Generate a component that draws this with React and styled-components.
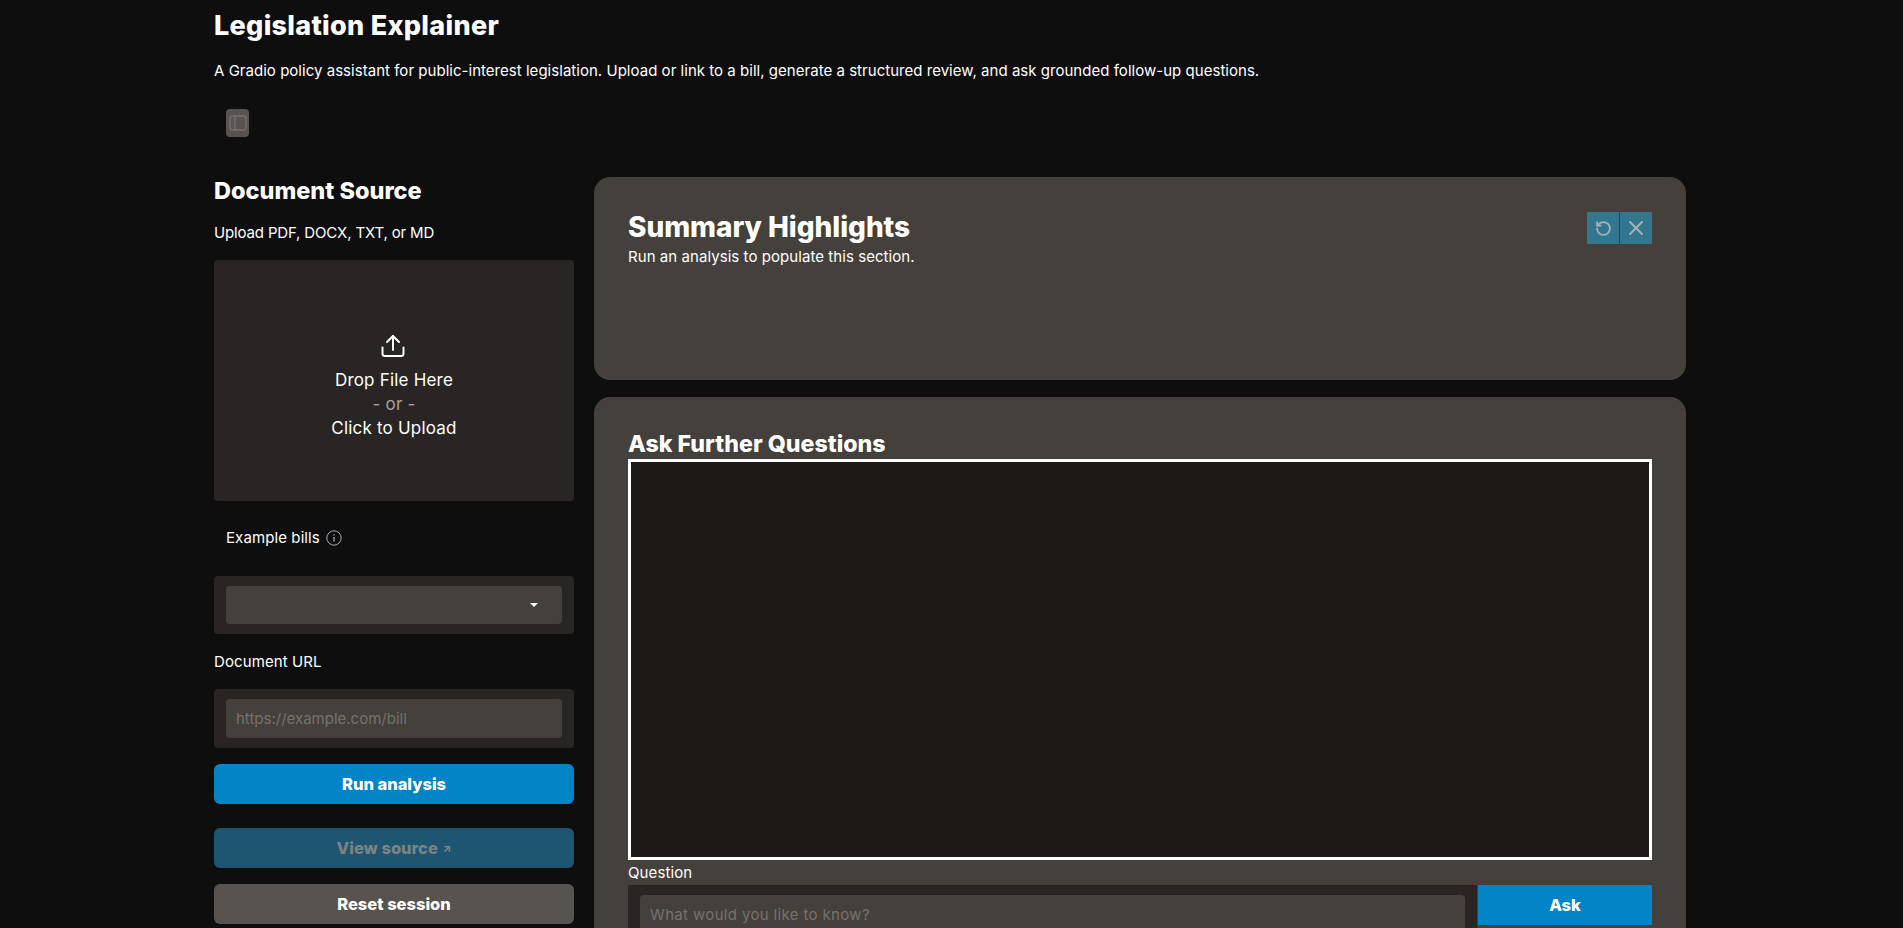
import React from "react";
import styled, { createGlobalStyle } from "styled-components";
import { RotateCcw, X } from "lucide-react";

const GlobalStyle = createGlobalStyle`
  html, body {
    margin: 0;
    height: 928px;
    overflow: hidden;
    background: #0f0e0f;
  }
  * {
    box-sizing: border-box;
  }
  body {
    font-family: Inter, "Noto Sans", sans-serif;
    color: #ffffff;
  }
`;

const App = () => {
  return (
    <Page>
      <GlobalStyle />
      <Title>Legislation Explainer</Title>
      <Subtitle>
        A Gradio policy assistant for public-interest legislation. Upload or
        link to a bill, generate a structured review, and ask grounded
        follow-up questions.
      </Subtitle>
      <SidebarToggle aria-label="Toggle sidebar">
        <svg width="18" height="18" viewBox="0 0 18 18" fill="none">
          <rect x="1" y="2" width="16" height="14" rx="2.5" stroke="#78716c" strokeWidth="1.3" />
          <path d="M6 2v14" stroke="#78716c" strokeWidth="1.3" />
          <path d="M3.5 6h.6M3.5 9h.6M3.5 12h.6" stroke="#78716c" strokeWidth="1.2" />
        </svg>
      </SidebarToggle>

      <Columns>
        <LeftColumn>
          <SectionTitle>Document Source</SectionTitle>
          <UploadLabel>Upload PDF, DOCX, TXT, or MD</UploadLabel>
          <DropZone>
            <svg width="24" height="24" viewBox="0 0 24 24" fill="none" stroke="#fff" strokeWidth="2" strokeLinecap="round" strokeLinejoin="round">
              <path d="M1.5 13.5v6a2.5 2.5 0 0 0 2.5 2.5h16a2.5 2.5 0 0 0 2.5-2.5v-6" />
              <path d="M12 16V2" />
              <path d="M6 8l6-6 6 6" />
            </svg>
            <DropLine>Drop File Here</DropLine>
            <DropOr>- or -</DropOr>
            <DropLine>Click to Upload</DropLine>
          </DropZone>
          <ExampleLabel>
            Example bills
            <svg width="16" height="16" viewBox="0 0 16 16" fill="none" stroke="#a3acb8" strokeWidth="1">
              <circle cx="8" cy="8" r="7.2" />
              <path d="M8 7v4.5M8 4.2v1.4" strokeWidth="1.3" />
            </svg>
          </ExampleLabel>
          <SelectBox>
            <SelectInner>
              <svg width="8" height="4" viewBox="0 0 8 4" fill="#fff">
                <path d="M0 0h8L4 4z" />
              </svg>
            </SelectInner>
          </SelectBox>
          <UrlLabel>Document URL</UrlLabel>
          <FieldBox>
            <FieldInner>
              <Placeholder>https://example.com/bill</Placeholder>
            </FieldInner>
          </FieldBox>
          <RunButton>Run analysis</RunButton>
          <SourceButton>
            View source <SourceArrow>↗</SourceArrow>
          </SourceButton>
          <ResetButton>Reset session</ResetButton>
        </LeftColumn>

        <RightColumn>
          <SummaryCard>
            <CardActions>
              <CardAction aria-label="Retry">
                <RotateCcw size={17} strokeWidth={2.5} />
              </CardAction>
              <CardAction aria-label="Clear">
                <X size={24} strokeWidth={1.9} />
              </CardAction>
            </CardActions>
            <CardTitle>Summary Highlights</CardTitle>
            <CardText>Run an analysis to populate this section.</CardText>
          </SummaryCard>
          <ChatCard>
            <ChatTitle>Ask Further Questions</ChatTitle>
            <ChatWindow />
            <QuestionLabel>Question</QuestionLabel>
            <AskRow>
              <AskField>
                <AskInner>
                  <AskPlaceholder>What would you like to know?</AskPlaceholder>
                </AskInner>
              </AskField>
              <AskButton>Ask</AskButton>
            </AskRow>
          </ChatCard>
        </RightColumn>
      </Columns>
    </Page>
  );
};

export default App;

const Page = styled.div`
  width: 1472px;
  margin-left: 214px;
  padding-top: 9px;
`;

const Title = styled.h1`
  margin: 0;
  font-size: 27px;
  line-height: 34px;
  font-weight: 800;
  letter-spacing: 0.3px;
`;

const Subtitle = styled.p`
  margin: 18px 0 0;
  font-size: 15px;
  line-height: 20px;
  letter-spacing: 0.03px;
`;

const SidebarToggle = styled.div`
  width: 23px;
  height: 28px;
  margin: 28px 0 0 12px;
  border-radius: 4px;
  background: #57534e;
  display: flex;
  align-items: center;
  justify-content: center;
`;

const Columns = styled.div`
  display: flex;
  gap: 20px;
  margin-top: 40px;
`;

const LeftColumn = styled.div`
  width: 360px;
  display: flex;
  flex-direction: column;
`;

const RightColumn = styled.div`
  width: 1092px;
  display: flex;
  flex-direction: column;
  gap: 17px;
`;

const SectionTitle = styled.h2`
  margin: 0;
  font-size: 23.5px;
  line-height: 28px;
  font-weight: 800;
`;

const UploadLabel = styled.div`
  margin-top: 18px;
  font-size: 15px;
  line-height: 20px;
  letter-spacing: -0.15px;
`;

const DropZone = styled.div`
  height: 241px;
  margin-top: 17px;
  border-radius: 4px;
  background: #292524;
  display: flex;
  flex-direction: column;
  align-items: center;
  justify-content: center;
  padding-top: 12px;

  svg {
    margin-bottom: 10px;
    margin-right: 2px;
  }
`;

const DropLine = styled.div`
  font-size: 17px;
  line-height: 24px;
  letter-spacing: 0.2px;
`;

const DropOr = styled(DropLine)`
  color: #a8a29e;
`;

const ExampleLabel = styled.div`
  margin: 27px 0 0 12px;
  height: 20px;
  font-size: 15px;
  line-height: 20px;
  letter-spacing: 0.1px;
  display: flex;
  align-items: center;
  gap: 6px;
`;

const FieldBox = styled.div`
  height: 59px;
  margin-top: 17px;
  padding: 10px 12px;
  border-radius: 4px;
  background: #292524;
`;

const FieldInner = styled.div`
  height: 39px;
  padding: 0 10px;
  border-radius: 4px;
  background: #44403c;
  display: flex;
  align-items: center;
  justify-content: flex-end;

  svg {
    margin-right: 14px;
  }
`;

const SelectBox = styled(FieldBox)`
  height: 58px;
  margin-top: 28px;
`;

const SelectInner = styled(FieldInner)`
  height: 38px;
`;

const Placeholder = styled.span`
  margin-right: auto;
  font-size: 15px;
  color: #78716c;
`;

const AskPlaceholder = styled(Placeholder)`
  letter-spacing: 0.35px;
`;

const UrlLabel = styled.div`
  margin-top: 18px;
  font-size: 15px;
  line-height: 20px;
  letter-spacing: 0.1px;
`;

const ActionButton = styled.div`
  height: 40px;
  border-radius: 6px;
  font-size: 16.5px;
  font-weight: 800;
  display: flex;
  align-items: center;
  justify-content: center;
  gap: 5px;
`;

const RunButton = styled(ActionButton)`
  margin-top: 16px;
  background: #0284c7;
`;

const SourceButton = styled(ActionButton)`
  margin-top: 24px;
  background: #1e5570;
  color: #7d8284;
`;

const SourceArrow = styled.span`
  font-size: 11px;
`;

const ResetButton = styled(ActionButton)`
  margin-top: 16px;
  background: #57534e;
`;

const Card = styled.section`
  border-radius: 16px;
  background: #44403c;
  padding: 34px;
`;

const SummaryCard = styled(Card)`
  height: 203px;
  position: relative;
`;

const CardActions = styled.div`
  position: absolute;
  top: 35px;
  right: 34px;
  display: flex;
  gap: 1px;
`;

const CardAction = styled.div`
  width: 32px;
  height: 32px;
  background: #33778f;
  color: #a4b3ba;
  display: flex;
  align-items: center;
  justify-content: center;
`;

const CardTitle = styled.h2`
  margin: 0;
  font-size: 28px;
  line-height: 33px;
  font-weight: 800;
  letter-spacing: -0.05px;
`;

const CardText = styled.p`
  margin: 3px 0 0;
  font-size: 15px;
  line-height: 20px;
  letter-spacing: 0.06px;
`;

const ChatCard = styled(Card)`
  height: 700px;
  padding-top: 31px;
`;

const ChatTitle = styled.h2`
  margin: 0;
  font-size: 23.2px;
  line-height: 32px;
  font-weight: 800;
  margin-bottom: -1px;
`;

const ChatWindow = styled.div`
  height: 401px;
  border: 3px solid #ffffff;
  background: #1c1917;
`;

const QuestionLabel = styled.div`
  margin-top: 3px;
  font-size: 15px;
  line-height: 20px;
  letter-spacing: 0.1px;
`;

const AskRow = styled.div`
  display: flex;
  margin-top: 2px;
`;

const AskField = styled.div`
  flex: 1;
  padding: 10px 12px;
  background: #292524;
  height: 59px;
`;

const AskInner = styled.div`
  height: 39px;
  padding: 0 10px;
  border-radius: 4px;
  background: #44403c;
  display: flex;
  align-items: center;
`;

const AskButton = styled(ActionButton)`
  width: 174px;
  margin-left: 1px;
  border-radius: 0;
  background: #0284c7;
`;
